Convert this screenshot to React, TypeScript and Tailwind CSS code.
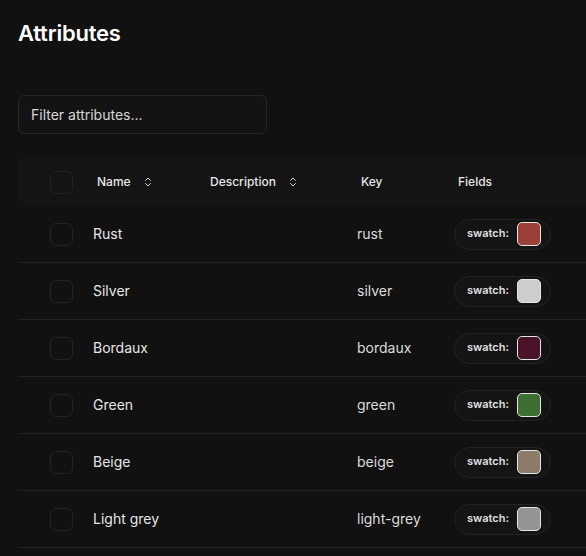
import { ChevronsUpDown } from "lucide-react"

type Attribute = {
  name: string
  key: string
  color: string
}

const attributes: Attribute[] = [
  { name: "Rust", key: "rust", color: "bg-[#9a4039]" },
  { name: "Silver", key: "silver", color: "bg-[#cdcdcd]" },
  { name: "Bordaux", key: "bordaux", color: "bg-[#4a1329]" },
  { name: "Green", key: "green", color: "bg-[#3f6e32]" },
  { name: "Beige", key: "beige", color: "bg-[#8c7b69]" },
  { name: "Light grey", key: "light-grey", color: "bg-[#949494]" },
]

export default function App() {
  return (
    <div className="min-h-screen w-full overflow-hidden bg-[#111111] font-['Inter',sans-serif] text-[#ededed]">
      <div className="pl-[18px] pt-[19px]">
        <h1 className="text-[22px] font-semibold leading-[28px] tracking-[-0.01em] text-white">
          Attributes
        </h1>

        <div className="mt-[48px] flex h-[39px] w-[249px] items-center rounded-md border border-[#262626] bg-[#131313] px-3 text-sm text-[#d6d6d6]">
          Filter attributes...
        </div>

        <div className="mt-[24px]">
          <HeaderRow />
          {attributes.map((attribute) => (
            <Row key={attribute.key} attribute={attribute} />
          ))}
        </div>
      </div>
    </div>
  )
}

function Checkbox() {
  return <div className="h-[23px] w-[23px] rounded-md border border-[#232323]" />
}

function HeaderRow() {
  return (
    <div className="flex h-[48px] items-center bg-[#141414] text-xs font-medium text-[#e6e6e6]">
      <div className="flex w-[63px] justify-start pl-8">
        <Checkbox />
      </div>
      <SortHeader label="Name" width="w-[113px]" />
      <SortHeader label="Description" width="w-[151px]" />
      <div className="w-[97px] pl-4">Key</div>
      <div className="pl-4">Fields</div>
    </div>
  )
}

function SortHeader({ label, width }: { label: string; width: string }) {
  return (
    <div className={`${width} flex items-center pl-4`}>
      <span>{label}</span>
      <ChevronsUpDown className="ml-[11px] h-3 w-3 text-[#d6d6d6]" strokeWidth={2} />
    </div>
  )
}

function Row({ attribute }: { attribute: Attribute }) {
  return (
    <div className="flex h-[57px] items-center border-b border-[#232323] text-sm text-[#e6e6e6]">
      <div className="flex w-[63px] justify-start pl-8">
        <Checkbox />
      </div>
      <div className="w-[264px] pl-3">{attribute.name}</div>
      <div className="w-[97px] pl-3 text-[#dcdcdc]">{attribute.key}</div>
      <div className="pl-3">
        <div className="flex h-[31px] w-[97px] items-center rounded-full border border-[#232323] bg-[#141414] pl-3">
          <span className="text-[11px] font-semibold text-[#e0e0e0]">swatch:</span>
          <span className={`ml-2 h-6 w-6 rounded-[5px] border border-[#e5e5e5] ${attribute.color}`} />
        </div>
      </div>
    </div>
  )
}
